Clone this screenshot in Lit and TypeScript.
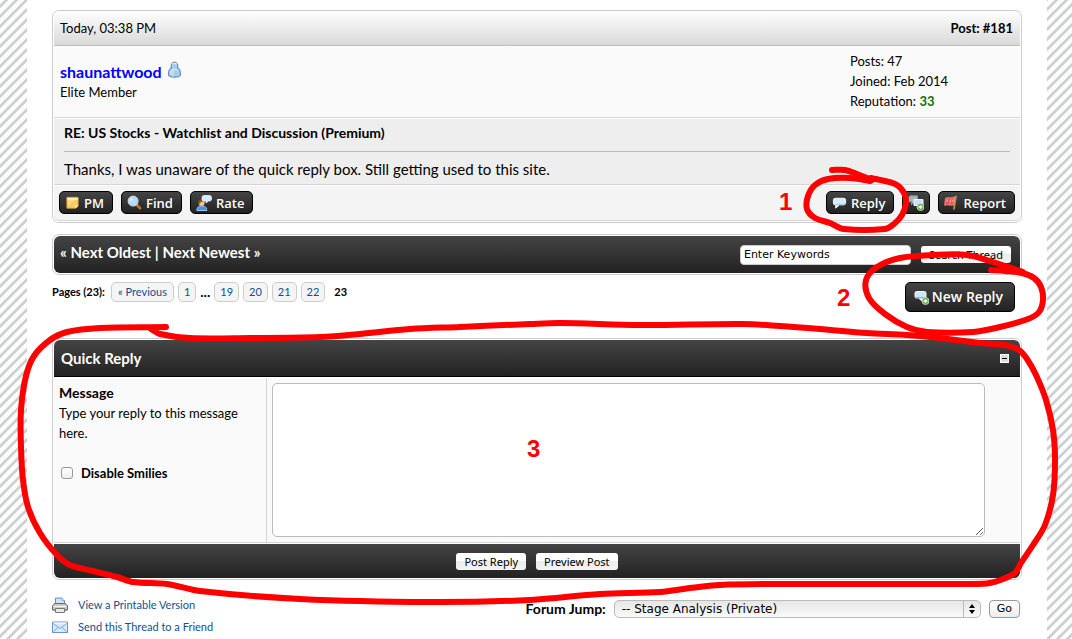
import { LitElement, html, css, svg } from "lit";
import { customElement } from "lit/decorators.js";

type Point = [number, number];

/** Smooth path through a list of points; handle length follows each segment's own length. */
function smooth(points: Point[]): string {
  const dir = (a: Point, b: Point): Point => {
    const l = Math.hypot(b[0] - a[0], b[1] - a[1]) || 1;
    return [(b[0] - a[0]) / l, (b[1] - a[1]) / l];
  };
  let d = `M${points[0][0]} ${points[0][1]}`;
  for (let i = 0; i < points.length - 1; i++) {
    const a = points[Math.max(i - 1, 0)];
    const b = points[i];
    const c = points[i + 1];
    const e = points[Math.min(i + 2, points.length - 1)];
    const k = Math.hypot(c[0] - b[0], c[1] - b[1]) / 3;
    const t = dir(a, c);
    const u = dir(b, e);
    d += ` C${b[0] + t[0] * k} ${b[1] + t[1] * k} ${c[0] - u[0] * k} ${c[1] - u[1] * k} ${c[0]} ${c[1]}`;
  }
  return d;
}

const MARKS: Point[][] = [
  [[832, 170], [845, 170], [857, 174], [872, 180]],
  [[870, 181], [850, 178], [828, 179], [815, 185], [808, 196], [807, 209], [815, 218], [830, 223], [844, 229], [885, 229], [894, 224], [902, 215], [906, 203], [904, 193], [897, 185], [885, 181], [871, 178]],
  [[991, 270], [1005, 271], [1022, 273], [1034, 278], [1041, 287], [1043, 300], [1039, 312], [1028, 319], [1000, 327], [973, 332], [927, 332], [907, 327], [885, 314], [869, 298], [866, 280], [877, 267], [900, 258], [933, 255], [967, 255], [993, 262], [1023, 272]],
  [[166, 327], [100, 328], [67, 332], [50, 340], [34, 356], [26, 376], [21, 410], [21, 447], [23, 480], [28, 507], [40, 533], [57, 555], [70, 565], [93, 571], [117, 577], [133, 582], [167, 584], [200, 591], [300, 599], [430, 602], [530, 600], [600, 594], [660, 592], [690, 588], [720, 585], [770, 584], [880, 584], [970, 584], [990, 583], [1003, 579], [1015, 573], [1021, 563], [1033, 545], [1045, 525], [1053, 495], [1055, 460], [1053, 430], [1046, 400], [1036, 375], [1027, 359], [1019, 350], [1005, 345], [980, 343], [940, 338], [907, 335], [867, 333], [820, 329], [780, 326], [743, 324], [640, 325], [560, 323], [530, 324], [460, 327], [410, 329], [360, 334], [320, 337], [250, 338], [190, 338], [160, 334], [151, 329]],
];

const icon = (body: unknown, size = 16) =>
  html`<svg width=${size} height=${size} viewBox="0 0 16 16" aria-hidden="true">${body}</svg>`;

const bubble = svg`<path d="M3.500 3.500h9a2 2 0 0 1 2 2v3a2 2 0 0 1-2 2H8l-4 3.500v-3.500h-.5a2 2 0 0 1-2-2v-3a2 2 0 0 1 2-2z" fill="#d8ebfc" stroke="#fff"/><path d="M4 10h8.500a1.500 1.500 0 0 0 1.500-1.500" fill="none" stroke="#9cc4ea"/>`;
const plus = svg`<circle cx="12.500" cy="12" r="3.500" fill="#57a63c" stroke="#d7efd0" stroke-width=".8"/><path d="M12.500 10v4M10.500 12h4" stroke="#fff" stroke-width="1.400"/>`;

const icons = {
  user: icon(svg`<path d="M2.500 13.500c-.6-4 .6-6 2.600-6.500C4.500 5 4.700 1.300 8 .9c3.300.4 3.500 4.100 2.900 6.100 2 .5 3.200 2.500 2.600 6.500-1.500 2.200-9.500 2.200-11 0z" fill="#a9cbea" stroke="#5b8fc4"/><path d="M6 3c.4-1 3.400-1 4 0M4.500 9c1-1.500 6-1.500 7 0M4.500 9v4M6.500 8.500v6" stroke="#dcebf8" fill="none"/>`, 17),
  note: icon(svg`<path d="M2 2.500h12v9.500l-2.500 2H2z" fill="#fcd977" stroke="#d7962b"/><path d="M2.500 3h11v2.500H2.500z" fill="#fff0b5"/><path d="M3 13.500l9-8M6 13.500l7.500-7" stroke="#f1b746"/><path d="M14 11.500h-2.500V14z" fill="#fff3c8"/>`, 15),
  find: icon(svg`<path d="M9.800 9.800l4 4.200" stroke="#b47637" stroke-width="3" stroke-linecap="round"/><circle cx="6.500" cy="6.500" r="5.300" fill="#b9dbf7" stroke="#e9f3fc"/><circle cx="6.500" cy="6.500" r="4.600" fill="none" stroke="#9cc2e8" stroke-width=".8"/><path d="M3.500 6.500c0-2 1.500-3 3-3" stroke="#fff" fill="none"/>`, 15),
  rate: icon(svg`<path d="M.8 15.500c0-3.500 2-4.500 5-4.500s5 1 5 4.500z" fill="#4e90df" stroke="#9ac4f3"/><circle cx="5.600" cy="8" r="3" fill="#f2c394"/><path d="M2.300 8c-.3-4 5.500-5 6.600-1.500-2-.5-4.300-.2-5.300 2.500z" fill="#8a4d1f"/><path d="M8 .5h5.500a2 2 0 0 1 2 2v1.500a2 2 0 0 1-2 2h-1l-2.500 2V6H8a2 2 0 0 1-2-2V2.500a2 2 0 0 1 2-2z" fill="#d4e8fc" stroke="#fff" stroke-width=".7"/>`, 16),
  reply: icon(bubble, 15),
  quote: icon(svg`<path d="M2 .8h7.500v6H6l-2.500 3v-3H.8V2z" fill="#a9b4bd" stroke="#8693a0"/><path d="M6 4.500h9v6h-3l-2.500 3v-3H6z" fill="#c8e1f9" stroke="#f3f8fd"/>${plus}`),
  flag: icon(svg`<path d="M12.800 1L10.500 15.500" stroke="#b98545" stroke-width="2"/><path d="M1.500 3.500c3-1.800 5 .8 10.300-1.500l-1.300 8.300c-4 1.800-6-1-9.800.7z" fill="#ee4f4a" stroke="#f9a29c" stroke-width=".8"/><path d="M4 4.500L2.800 7.500M7.500 4.500L6 9M10 4.500l-.8 3" stroke="#ffc5bf"/>`, 15),
  newReply: icon(svg`<path d="M3.500 2.500h8a1.500 1.500 0 0 1 1.500 1.500v3.500a1.500 1.500 0 0 1-1.500 1.500H9v3l-3.500-3h-2a1.500 1.500 0 0 1-1.500-1.500v-3.500a1.500 1.500 0 0 1 1.500-1.500z" fill="#cfe5fa" stroke="#f6faff"/><path d="M3 8.500h8.500" stroke="#80b3e3"/>${plus}`),
  printer: icon(svg`<path d="M3.500 7V1h6.500l2.500 2.500V7z" fill="#cfe4fb" stroke="#5c93d0"/><path d="M10 1v2.500h2.500" fill="#fff" stroke="#5c93d0" stroke-width=".7"/><path d="M2.500 6.500h11l2 2.500v4H.5V9z" fill="#c9cac6" stroke="#666864"/><path d="M1.500 9.500h13" stroke="#f6f6f4"/><path d="M3.500 11.500h9v4h-9z" fill="#e9e9e7" stroke="#777975"/><path d="M1.500 13.500h2m9 0h2" stroke="#777"/>`),
  mail: icon(svg`<path d="M.5 3h15v10.500H.5z" fill="#d9eafb" stroke="#6694cb"/><path d="M1.500 4h13" stroke="#fff"/><path d="M1.500 4.500l6.500 5 6.500-5M1.500 12.500L6 8.500m4 0l4.500 4" fill="none" stroke="#76a3d6"/>`),
};

@customElement("app-root")
class AppRoot extends LitElement {
  static styles = css`
    :host {
      display: block;
      position: relative;
      min-height: 100vh;
      overflow: hidden;
      box-sizing: border-box;
      padding: 0 25px 0 27px;
      color: #000;
      font: 13px/20px Lato, "Open Sans", sans-serif;
      background: linear-gradient(135deg, #fff 0 22%, #d0d2d1 24% 41%, #fff 43% 72%, #d0d2d1 74% 91%, #fff 93%) 0 0 / 10px 10px;
    }
    * { box-sizing: border-box; }
    h2, p { margin: 0; }
    a { color: #0f5092; text-decoration: none; }
    svg { flex: none; }
    .page { background: #fff; min-height: 100vh; padding: 10px 25px 0; }
    .box { border: 1px solid #ccc; border-radius: 7px; padding: 1px; background: #fff; }
    .dark { background: linear-gradient(#444, #222); color: #fff; }

    .post-head {
      display: flex; justify-content: space-between; align-items: center;
      height: 34px; padding: 0 7px 2px 6px;
      border-bottom: 1px solid #bbb; border-radius: 6px 6px 0 0;
      background: linear-gradient(#fdfdfd, #d9d9d9);
    }
    .author {
      display: flex; justify-content: space-between;
      margin-top: 1px; padding: 4px 0 6px 6px; height: 71px;
      background: #fafafa; border-bottom: 1px solid #d5d5d5;
    }
    .who { padding-top: 10px; }
    .name { display: flex; align-items: center; gap: 4px; font-size: 16px; font-weight: 700; }
    .name a { color: #00f; }
    .name svg { margin-bottom: 4px; }
    .stats { width: 170px; }
    .rep { color: #107010; font-weight: 700; }
    .message {
      margin-top: 1px; padding: 4px 10px; height: 66px;
      background: #eee; border-bottom: 1px solid #d5d5d5;
    }
    .subject { font-size: 14px; font-weight: 700; padding-bottom: 8px; border-bottom: 1px solid #bbb; }
    .text { font-size: 15px; padding-top: 7px; }
    .actions {
      display: flex; justify-content: space-between;
      margin-top: 1px; padding: 5px 5px 6px;
      background: #f4f4f4; border-bottom: 1px solid #d5d5d5; border-radius: 0 0 6px 6px;
    }
    .group { display: flex; gap: 8px; }
    .btn {
      display: flex; align-items: center; gap: 4px;
      height: 23px; padding: 0 8px 0 5px;
      border: 1px solid #000; border-radius: 5px;
      background: linear-gradient(#444, #222); color: #fff;
      font: 600 13px/20px "Open Sans", sans-serif;
    }
    .btn.tool { padding: 0 5px; }
    .btn.big { height: 30px; padding: 0 11px 0 7px; font-size: 14px; gap: 3px; }

    .threadbar { margin-top: 11px; }
    .bar {
      display: flex; justify-content: space-between; align-items: center;
      height: 37px; padding: 0 9px 0 6px; border-radius: 6px;
    }
    .bar strong { font-size: 15px; padding-bottom: 6px; }
    .bar a { color: #fff; }
    .search { display: flex; align-items: center; gap: 10px; }
    .search input {
      width: 171px; height: 20px; padding: 0 3px;
      border: 1px solid #ccc; border-radius: 4px; background: #fff; color: #000;
      font: 11px/16px "DejaVu Sans", sans-serif;
    }
    .push {
      height: 17px; padding: 0 8px; overflow: hidden;
      border: 0; border-radius: 3px;
      background: linear-gradient(#fff 0 45%, #ececec 50%, #f4f4f4); color: #000;
      font: 11px/17px "Noto Sans", sans-serif;
    }

    .paging { display: flex; justify-content: space-between; padding: 7px 7px 26px 0; }
    .pages { display: flex; align-items: center; gap: 4px; height: 20px; font-size: 11px; }
    .pages a { height: 20px; padding: 0 5px; border: 1px solid #ccc; border-radius: 5px; background: #f5f5f5; line-height: 18px; }
    .pages .prev { margin-left: 2px; padding: 0 6px; }
    .pages .current { padding-left: 5px; }
    .dots { font-size: 14px; font-weight: 700; }

    .cap {
      display: flex; justify-content: space-between; align-items: center;
      height: 37px; padding: 0 11px 0 7px;
      border-bottom: 1px solid #000; border-radius: 6px 6px 0 0;
    }
    .cap h2 { font-size: 15px; }
    .toggle { width: 9px; height: 9px; padding: 0; border: 1px solid #fff; background: #ddd; display: grid; place-items: center; }
    .toggle::before { content: ""; width: 5px; height: 1px; background: #000; }
    .form {
      display: grid; grid-template-columns: 22% 1fr;
      height: 165px; margin: 1px 0; border-bottom: 1px solid #d5d5d5;
    }
    .side { padding: 5px; background: #fafafa; border-right: 1px solid #d5d5d5; }
    .side strong { font-size: 14px; }
    .check { display: flex; align-items: center; gap: 8px; padding: 20px 2px; }
    .check input { appearance: none; width: 12px; height: 12px; margin: 0; border: 1px solid #999; border-radius: 3px; background: linear-gradient(#fff, #eee); }
    .check label { font-size: 13px; font-weight: 700; }
    .entry { padding: 5px; background: #fafafa; }
    textarea { display: block; width: 96%; height: 154px; border: 1px solid #bbb; border-radius: 5px; background: #fff; resize: vertical; font: inherit; }
    .submit { display: flex; justify-content: center; align-items: center; gap: 10px; height: 34px; border-radius: 0 0 6px 6px; }

    .foot { display: flex; justify-content: space-between; align-items: flex-start; padding: 15px 2px 0 0; }
    .links { display: grid; gap: 2px; font-size: 11px; }
    .links a { display: flex; align-items: center; gap: 10px; }
    .jump { display: flex; align-items: center; gap: 8px; padding-top: 4px; }
    .jump label { font-size: 14px; font-weight: 700; }
    .pick { position: relative; display: flex; }
    .pick svg { position: absolute; right: 0; top: 0; pointer-events: none; }
    select {
      appearance: none; width: 367px; height: 18px; padding: 0 7px;
      border: 1px solid #bbb; border-radius: 5px; background: linear-gradient(#e6e6e6, #fafafa); color: #000;
      font: 12px/16px "DejaVu Sans", sans-serif;
    }
    .go { height: 18px; padding: 0 7px; border: 1px solid #999; border-radius: 4px; background: linear-gradient(#fff, #eee); color: #000; font: 11px/16px "DejaVu Sans", sans-serif; }

    .marks { position: absolute; left: 0; top: 0; pointer-events: none; }
    .marks path { fill: none; stroke: #f00; stroke-width: 6; stroke-linecap: round; stroke-linejoin: round; }
    .marks text { fill: #f00; font: 700 24px "Liberation Sans", sans-serif; }
  `;

  render() {
    return html`
      <main class="page">
        <article class="box">
          <header class="post-head"><span>Today, 03:38 PM</span><strong>Post: #181</strong></header>
          <section class="author">
            <div class="who">
              <div class="name"><a href="#user">shaunattwood</a>${icons.user}</div>
              <div>Elite Member</div>
            </div>
            <div class="stats">
              <div>Posts: 47</div>
              <div>Joined: Feb 2014</div>
              <div>Reputation: <span class="rep">33</span></div>
            </div>
          </section>
          <section class="message">
            <div class="subject">RE: US Stocks - Watchlist and Discussion (Premium)</div>
            <p class="text">Thanks, I was unaware of the quick reply box. Still getting used to this site.</p>
          </section>
          <footer class="actions">
            <div class="group">
              <button class="btn">${icons.note}PM</button>
              <button class="btn">${icons.find}Find</button>
              <button class="btn">${icons.rate}Rate</button>
            </div>
            <div class="group">
              <button class="btn">${icons.reply}Reply</button>
              <button class="btn tool" aria-label="Multiquote">${icons.quote}</button>
              <button class="btn">${icons.flag}Report</button>
            </div>
          </footer>
        </article>

        <div class="box threadbar">
          <div class="bar dark">
            <strong>« <a href="#oldest">Next Oldest</a> | <a href="#newest">Next Newest</a> »</strong>
            <div class="search">
              <input type="text" aria-label="Keywords" value="Enter Keywords" />
              <button class="push">Search Thread</button>
            </div>
          </div>
        </div>

        <div class="paging">
          <nav class="pages">
            <strong>Pages (23):</strong>
            <a class="prev" href="#p22">« Previous</a><a href="#p1">1</a><span class="dots">...</span>
            ${[19, 20, 21, 22].map((n) => html`<a href="#p${n}">${n}</a>`)}
            <strong class="current">23</strong>
          </nav>
          <button class="btn big">${icons.newReply}New Reply</button>
        </div>

        <section class="box">
          <div class="cap dark"><h2>Quick Reply</h2><button class="toggle" aria-label="Collapse"></button></div>
          <div class="form">
            <div class="side">
              <label for="message"><strong>Message</strong><br />Type your reply to this message here.</label>
              <div class="check"><input type="checkbox" id="smilies" /><label for="smilies">Disable Smilies</label></div>
            </div>
            <div class="entry"><textarea id="message"></textarea></div>
          </div>
          <div class="submit dark">
            <button class="push">Post Reply</button>
            <button class="push">Preview Post</button>
          </div>
        </section>

        <footer class="foot">
          <nav class="links">
            <a href="#print">${icons.printer}View a Printable Version</a>
            <a href="#send">${icons.mail}Send this Thread to a Friend</a>
          </nav>
          <div class="jump">
            <label for="jump">Forum Jump:</label>
            <div class="pick">
              <select id="jump"><option>-- Stage Analysis (Private)</option></select>
              <svg width="18" height="18" viewBox="0 0 18 18" aria-hidden="true">
                <path d="M.5 1v16" stroke="#bbb" /><path d="M6 8l3-4 3 4zM6 10l3 4 3-4z" fill="#000" />
              </svg>
            </div>
            <button class="go">Go</button>
          </div>
        </footer>
      </main>
      <svg class="marks" width="1072" height="639" viewBox="0 0 1072 639">
        ${MARKS.map((m) => svg`<path d=${smooth(m)} />`)}
        <text x="779" y="210">1</text>
        <text x="837" y="306">2</text>
        <text x="527" y="457">3</text>
      </svg>
    `;
  }
}
